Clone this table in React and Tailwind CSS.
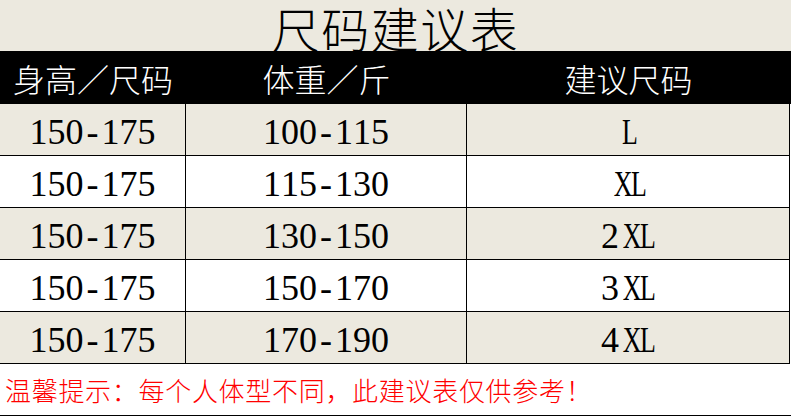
const rows = [
  ["150-175", "100-115", "L"],
  ["150-175", "115-130", "XL"],
  ["150-175", "130-150", "2XL"],
  ["150-175", "150-170", "3XL"],
  ["150-175", "170-190", "4XL"],
];

const cjk = { fontFamily: '"Noto Sans CJK SC", sans-serif' };

// half-width latin glyphs, like the sheet's SimSun cells
const Mono = ({ text }) => (
  <span style={{ fontFamily: '"Liberation Serif", serif' }} className="text-[36px] leading-none whitespace-nowrap">
    {text.split("").map((ch, i) => (
      <span key={i} className="inline-block w-[18px] text-center">
        {/[A-Z]/.test(ch) ? <span className="inline-block scale-x-[0.72]">{ch}</span> : ch}
      </span>
    ))}
  </span>
);

const App = () => {
  return (
    <div className="w-[791px] h-[417px] bg-white text-black overflow-hidden" style={cjk}>
      <div className="h-[51px] bg-[#ece9df] flex items-center justify-center">
        <h1 className="text-[48px] font-light leading-[50px] pt-[3px] tracking-[1.5px]">尺码建议表</h1>
      </div>
      <div className="h-[53px] bg-black text-white grid grid-cols-[186px_281px_1fr] items-center text-[32px] font-light leading-none">
        <div className="text-center">身高／尺码</div>
        <div className="text-center">体重／斤</div>
        <div className="text-center pr-[1px]">建议尺码</div>
      </div>
      <div className="w-[790px]">
        {rows.map((r, i) => (
          <div
            key={i}
            className={`grid grid-cols-[186px_281px_323px] h-[52px] border-b border-black ${
              i % 2 === 0 ? "bg-[#ece9df]" : "bg-white"
            }`}
          >
            {r.map((c, j) => (
              <div key={j} className="flex items-center justify-center border-r border-black pt-[4px]">
                <Mono text={c} />
              </div>
            ))}
          </div>
        ))}
      </div>
      <div className="h-[52px] border-b border-black flex items-center pl-[5px]">
        <p className="text-[26px] font-light text-[#ff0000] leading-none tracking-[0.7px]">
          温馨提示：每个人体型不同，此建议表仅供参考！
        </p>
      </div>
    </div>
  );
};

export default App;
